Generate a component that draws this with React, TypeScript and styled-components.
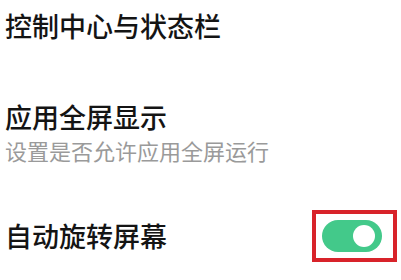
import styled, { createGlobalStyle } from "styled-components";

const GlobalStyle = createGlobalStyle`
    html, body {
        margin: 0;
        padding: 0;
        background: #ffffff;
    }
    body {
        font-family: "Noto Sans CJK SC", "Noto Sans", sans-serif;
    }
`

const Page = styled.div`
    width: 401px;
    height: 280px;
    box-sizing: border-box;
    padding: 8px 4px 0 5px;
    overflow: hidden;
    display: flex;
    flex-direction: column;
`

const Item = styled.div<{ $top?: number }>`
    display: flex;
    align-items: center;
    justify-content: space-between;
    margin-top: ${props => props.$top ?? 0}px;
`

const TextBlock = styled.div`
    display: flex;
    flex-direction: column;
`

const Title = styled.div`
    font-size: 27px;
    line-height: 36px;
    color: #141414;
    font-weight: 500;
`

const Subtitle = styled.div`
    font-size: 22px;
    line-height: 30px;
    color: #9a9a9a;
`

const Highlight = styled.div`
    border: 4px solid #d8232a;
    padding: 6px 11px 6px 6px;
    display: flex;
`

const Switch = styled.div<{ $on?: boolean }>`
    width: 60px;
    height: 32px;
    border-radius: 16px;
    background: ${props => (props.$on ? "#43c98a" : "#d8d8d8")};
    position: relative;

    &::after {
        content: '';
        position: absolute;
        top: 5px;
        right: 7px;
        width: 22px;
        height: 22px;
        border-radius: 50%;
        background: #ffffff;
    }
`

export default function App() {
    return (
        <>
            <GlobalStyle />
            <Page>
                <Item>
                    <Title>控制中心与状态栏</Title>
                </Item>
                <Item $top={55}>
                    <TextBlock>
                        <Title>应用全屏显示</Title>
                        <Subtitle>设置是否允许应用全屏运行</Subtitle>
                    </TextBlock>
                </Item>
                <Item $top={45}>
                    <Title>自动旋转屏幕</Title>
                    <Highlight>
                        <Switch $on />
                    </Highlight>
                </Item>
            </Page>
        </>
    )
}
